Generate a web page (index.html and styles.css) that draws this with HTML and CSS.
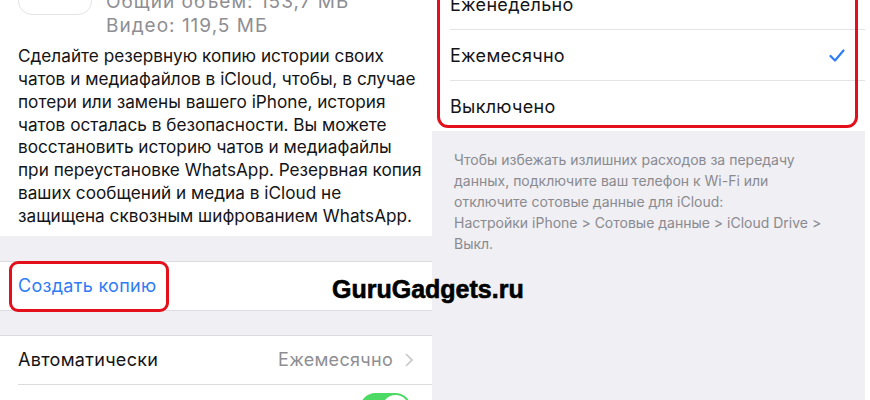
FILE: index.html
```html
<!DOCTYPE html>
<html lang="ru">
<head>
    <meta charset="UTF-8">
    <title>Резервная копия</title>
    <link rel="stylesheet" href="styles.css">
</head>
<body>
    <div class="page">
        <!-- Left screen: chat backup -->
        <div class="left">
            <div class="info">
                <div class="storage">
                    <div class="app-icon"></div>
                    <div class="sizes">
                        <div>Общий объем: 153,7 МБ</div>
                        <div>Видео: 119,5 МБ</div>
                    </div>
                </div>
                <p class="about">Сделайте резервную копию истории своих<br>чатов и медиафайлов в iCloud, чтобы, в случае<br>потери или замены вашего iPhone, история<br>чатов осталась в безопасности. Вы можете<br>восстановить историю чатов и медиафайлы<br>при переустановке WhatsApp. Резервная копия<br>ваших сообщений и медиа в iCloud не<br>защищена сквозным шифрованием WhatsApp.</p>
            </div>

            <div class="group">
                <div class="cell">
                    <span class="link">Создать копию</span>
                    <span class="mark mark-backup"></span>
                </div>
            </div>

            <div class="group">
                <div class="cell sep">
                    <span>Автоматически</span>
                    <span class="value">Ежемесячно
                        <svg class="chevron" width="8" height="14" viewBox="0 0 8 14"><path d="M1 1l6 6-6 6" fill="none" stroke="#c7c7cc" stroke-width="1.6"/></svg>
                    </span>
                </div>
                <div class="cell">
                    <span>Включить видео</span>
                    <span class="toggle"><span class="knob"></span></span>
                </div>
            </div>
        </div>

        <!-- Right screen: auto backup frequency -->
        <div class="right">
            <div class="list">
                <div class="row sep">Еженедельно</div>
                <div class="row sep">
                    <span>Ежемесячно</span>
                    <svg class="check" width="16" height="13" viewBox="0 0 16 13"><path d="M1.5 7l4.5 4.5L14.5 1.5" fill="none" stroke="#2f7cf6" stroke-width="2.2" stroke-linecap="round" stroke-linejoin="round"/></svg>
                </div>
                <div class="row">Выключено</div>
                <span class="mark mark-list"></span>
            </div>
            <p class="note">Чтобы избежать излишних расходов за передачу<br>данных, подключите ваш телефон к Wi-Fi или<br>отключите сотовые данные для iCloud:<br>Настройки iPhone &gt; Сотовые данные &gt; iCloud Drive &gt;<br>Выкл.</p>
        </div>

        <div class="watermark">GuruGadgets.ru</div>
    </div>
</body>
</html>
```

FILE: styles.css
```css
/* Two iOS screens side by side */
body {
    margin: 0;
    font-family: Inter, "Noto Sans", sans-serif;
    background-color: #fff;
    color: #141416;
}
.page {
    position: relative;
    display: flex;
    width: 870px;
    height: 400px;
    overflow: hidden;
}
.left {
    width: 432px;
    background-color: #efeff4;
}
.right {
    width: 433px;
    background-color: #efeff4;
}

/* left screen */
.info {
    background-color: #fff;
    padding: 0 18px 8px;
}
.storage {
    display: flex;
    align-items: flex-end;
    gap: 14px;
    margin-top: -59px;
}
.app-icon {
    width: 72px;
    height: 72px;
    margin-bottom: 23px;
    border: 1px solid #e3e3e6;
    border-radius: 14px;
}
.sizes {
    font-size: 19px;
    line-height: 24px;
    letter-spacing: 1px;
    color: #8e8e93;
}
.about {
    margin: 7px 0 0;
    font-size: 17.2px;
    line-height: 22.86px;
    white-space: nowrap;
}
.group {
    margin-top: 25px;
    background-color: #fff;
    border-top: 1px solid #dcdce0;
    border-bottom: 1px solid #dcdce0;
}
.group + .group {
    margin-top: 24px;
}
.cell {
    position: relative;
    display: flex;
    align-items: center;
    justify-content: space-between;
    height: 48px;
    margin-left: 18px;
    padding-right: 18px;
    font-size: 18px;
    letter-spacing: 0.3px;
}
.sep {
    border-bottom: 1px solid #dcdce0;
}
.link {
    color: #2f7cf6;
}
.value {
    display: flex;
    align-items: center;
    gap: 12px;
    color: #8e8e93;
}
.chevron {
    margin-right: 1px;
}
.toggle {
    position: relative;
    width: 51px;
    height: 31px;
    margin-right: 3px;
    border-radius: 16px;
    background-color: #4cd964;
}
.knob {
    position: absolute;
    top: 2px;
    right: 2px;
    width: 27px;
    height: 27px;
    border-radius: 50%;
    background-color: #fff;
}

/* red annotation frames */
.mark {
    position: absolute;
    border: 3px solid #e3101c;
    box-sizing: border-box;
}
.mark-backup {
    left: -9px;
    top: -1px;
    width: 160px;
    height: 51px;
    border-radius: 9px;
}
.mark-list {
    left: 5px;
    top: -10px;
    width: 421px;
    height: 159px;
    border-radius: 11px;
}

/* right screen */
.list {
    position: relative;
    margin-top: -21px;
    background-color: #fff;
}
.row {
    display: flex;
    align-items: center;
    justify-content: space-between;
    height: 50px;
    margin-left: 18px;
    padding-right: 20px;
    font-size: 18px;
    letter-spacing: 0.3px;
}
.row.sep {
    border-bottom: 1px solid #e3e3e6;
}
.note {
    margin: 0;
    padding: 18px 22px 0;
    font-size: 14px;
    line-height: 21px;
    color: #8a8a8f;
}

.watermark {
    position: absolute;
    left: 332px;
    top: 274px;
    font-family: "Liberation Sans", Arial, sans-serif;
    font-size: 25px;
    font-weight: bold;
    line-height: 30px;
    color: #000;
    -webkit-text-stroke: 0.6px #000;
}
```
